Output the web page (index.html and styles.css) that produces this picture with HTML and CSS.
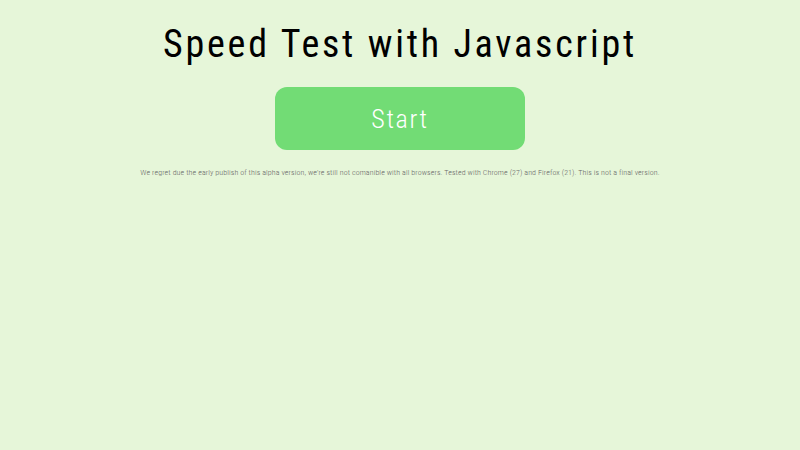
FILE: index.html
```html
<!DOCTYPE html>
<html lang="en">
<head>
<meta charset="UTF-8" />
<title>Speed Test with Javascript</title>
<link rel="stylesheet" href="styles.css">
</head>
<body>

<h1>Speed Test with Javascript</h1>
<button id="startBtn">Start</button>
<p class="note">We regret due the early publish of this alpha version, we're still not comanible with all browsers. Tested with Chrome (27) and Firefox (21). This is not a final version.</p>

</body>
</html>
```

FILE: styles.css
```css
body {
  font-family: 'Roboto', sans-serif;
  font-stretch: 75%;
  background: #e6f6d9;
  color: #000;
  display: flex;
  flex-direction: column;
  align-items: center;
  min-height: 100vh;
  margin: 0;
  box-sizing: border-box;
  padding-top: 22px;
}

h1 {
  font-weight: 450;
  font-size: 38px;
  line-height: 44px;
  letter-spacing: 2.8px;
  margin: 0 0 21px;
}

#startBtn {
  width: 250px;
  height: 63px;
  background: #72dc75;
  border: none;
  border-radius: 12px;
  font-family: inherit;
  font-stretch: inherit;
  font-weight: 350;
  font-size: 26px;
  color: #fff;
  letter-spacing: 1.6px;
}

.note {
  margin: 17px 0 0;
  font-size: 8px;
  font-weight: 300;
  line-height: 12px;
  letter-spacing: 0.08px;
  color: #666;
}
```
